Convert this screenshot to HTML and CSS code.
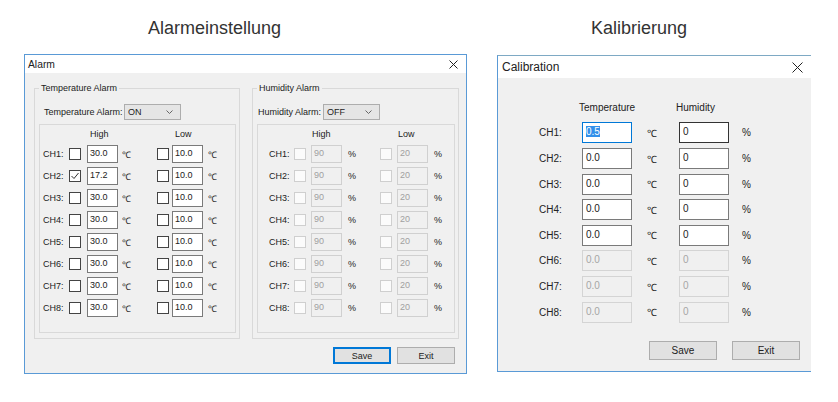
FILE: index.html
```html
<!DOCTYPE html>
<html>

<head>
	<meta charset="utf-8">
	<link rel="stylesheet" href="styles.css">
</head>

<body>
	<div class="page">
		<div class="captions">
			<div class="caption caption-alarm">Alarmeinstellung</div>
			<div class="caption">Kalibrierung</div>
		</div>

		<div class="dialogs">
			<!-- Alarm dialog -->
			<div class="dlg dlg-alarm">
				<div class="titlebar">
					<span>Alarm</span>
					<svg class="close" width="9" height="9" viewBox="0 0 9 9"><path d="M0.5 0.5L8.5 8.5M8.5 0.5L0.5 8.5" /></svg>
				</div>
				<div class="dlg-body">
					<div class="groups">
						<fieldset class="group group-temp">
							<legend>Temperature Alarm</legend>
							<div class="mode">
								<span class="mode-label">Temperature Alarm:</span>
								<div class="combo">ON<svg width="7" height="4" viewBox="0 0 7 4"><path d="M0.5 0.5L3.5 3.5L6.5 0.5" /></svg></div>
							</div>
							<div class="panel">
								<div class="chgrid">
									<span></span><span></span><span class="head">High</span><span></span><span></span><span class="head">Low</span><span></span>
									<span class="ch">CH1:</span><span class="cb"></span><span class="field">30.0</span><span class="unit">℃</span><span class="cb"></span><span class="field">10.0</span><span class="unit">℃</span>
									<span class="ch">CH2:</span><span class="cb"><svg width="10" height="10" viewBox="0 0 10 10"><path d="M1.5 5L4 7.5L8.5 2" /></svg></span><span class="field">17.2</span><span class="unit">℃</span><span class="cb"></span><span class="field">10.0</span><span class="unit">℃</span>
									<span class="ch">CH3:</span><span class="cb"></span><span class="field">30.0</span><span class="unit">℃</span><span class="cb"></span><span class="field">10.0</span><span class="unit">℃</span>
									<span class="ch">CH4:</span><span class="cb"></span><span class="field">30.0</span><span class="unit">℃</span><span class="cb"></span><span class="field">10.0</span><span class="unit">℃</span>
									<span class="ch">CH5:</span><span class="cb"></span><span class="field">30.0</span><span class="unit">℃</span><span class="cb"></span><span class="field">10.0</span><span class="unit">℃</span>
									<span class="ch">CH6:</span><span class="cb"></span><span class="field">30.0</span><span class="unit">℃</span><span class="cb"></span><span class="field">10.0</span><span class="unit">℃</span>
									<span class="ch">CH7:</span><span class="cb"></span><span class="field">30.0</span><span class="unit">℃</span><span class="cb"></span><span class="field">10.0</span><span class="unit">℃</span>
									<span class="ch">CH8:</span><span class="cb"></span><span class="field">30.0</span><span class="unit">℃</span><span class="cb"></span><span class="field">10.0</span><span class="unit">℃</span>
								</div>
							</div>
						</fieldset>

						<fieldset class="group group-hum">
							<legend>Humidity Alarm</legend>
							<div class="mode">
								<span class="mode-label">Humidity Alarm:</span>
								<div class="combo">OFF<svg width="7" height="4" viewBox="0 0 7 4"><path d="M0.5 0.5L3.5 3.5L6.5 0.5" /></svg></div>
							</div>
							<div class="panel">
								<div class="chgrid off">
									<span></span><span></span><span class="head">High</span><span></span><span></span><span class="head">Low</span><span></span>
									<span class="ch">CH1:</span><span class="cb"></span><span class="field">90</span><span class="unit">%</span><span class="cb"></span><span class="field">20</span><span class="unit">%</span>
									<span class="ch">CH2:</span><span class="cb"></span><span class="field">90</span><span class="unit">%</span><span class="cb"></span><span class="field">20</span><span class="unit">%</span>
									<span class="ch">CH3:</span><span class="cb"></span><span class="field">90</span><span class="unit">%</span><span class="cb"></span><span class="field">20</span><span class="unit">%</span>
									<span class="ch">CH4:</span><span class="cb"></span><span class="field">90</span><span class="unit">%</span><span class="cb"></span><span class="field">20</span><span class="unit">%</span>
									<span class="ch">CH5:</span><span class="cb"></span><span class="field">90</span><span class="unit">%</span><span class="cb"></span><span class="field">20</span><span class="unit">%</span>
									<span class="ch">CH6:</span><span class="cb"></span><span class="field">90</span><span class="unit">%</span><span class="cb"></span><span class="field">20</span><span class="unit">%</span>
									<span class="ch">CH7:</span><span class="cb"></span><span class="field">90</span><span class="unit">%</span><span class="cb"></span><span class="field">20</span><span class="unit">%</span>
									<span class="ch">CH8:</span><span class="cb"></span><span class="field">90</span><span class="unit">%</span><span class="cb"></span><span class="field">20</span><span class="unit">%</span>
								</div>
							</div>
						</fieldset>
					</div>
					<div class="buttons">
						<div class="btn default">Save</div>
						<div class="btn">Exit</div>
					</div>
				</div>
			</div>

			<!-- Calibration dialog -->
			<div class="dlg dlg-cal">
				<div class="titlebar">
					<span>Calibration</span>
					<svg class="close" width="11" height="11" viewBox="0 0 11 11"><path d="M0.5 0.5L10.5 10.5M10.5 0.5L0.5 10.5" /></svg>
				</div>
				<div class="dlg-body">
					<div class="calgrid">
						<span></span><span class="head">Temperature</span><span></span><span class="head">Humidity</span><span></span>
						<span class="ch">CH1:</span><span class="field focus"><span class="sel">0.5</span></span><span class="unit">℃</span><span class="field hover">0</span><span class="unit">%</span>
						<span class="ch">CH2:</span><span class="field">0.0</span><span class="unit">℃</span><span class="field">0</span><span class="unit">%</span>
						<span class="ch">CH3:</span><span class="field">0.0</span><span class="unit">℃</span><span class="field">0</span><span class="unit">%</span>
						<span class="ch">CH4:</span><span class="field">0.0</span><span class="unit">℃</span><span class="field">0</span><span class="unit">%</span>
						<span class="ch">CH5:</span><span class="field">0.0</span><span class="unit">℃</span><span class="field">0</span><span class="unit">%</span>
						<span class="ch">CH6:</span><span class="field off">0.0</span><span class="unit">℃</span><span class="field off">0</span><span class="unit">%</span>
						<span class="ch">CH7:</span><span class="field off">0.0</span><span class="unit">℃</span><span class="field off">0</span><span class="unit">%</span>
						<span class="ch">CH8:</span><span class="field off">0.0</span><span class="unit">℃</span><span class="field off">0</span><span class="unit">%</span>
					</div>
					<div class="buttons">
						<div class="btn">Save</div>
						<div class="btn">Exit</div>
					</div>
				</div>
			</div>
		</div>
	</div>
</body>

</html>
```

FILE: styles.css
```css
body {
	margin: 0;
	background-color: #fff;
	font-family: "Liberation Sans", Arial, sans-serif;
	color: #222;
}

.page {
	width: 838px;
	height: 402px;
}

/* headings above the two screenshots */
.captions {
	display: flex;
	align-items: center;
	height: 54px;
	padding-top: 2px;
	box-sizing: border-box;
	padding-left: 148px;
	font-size: 18px;
	color: #333;
}

.caption-alarm {
	width: 443px;
}

.dialogs {
	display: flex;
	align-items: flex-start;
	gap: 30px;
	padding-left: 24px;
}

.dlg {
	border: solid 1px #5a9ad6;
	background-color: #f0f0f0;
	box-sizing: border-box;
}

.titlebar {
	display: flex;
	align-items: center;
	justify-content: space-between;
	background-color: #fff;
}

.close path {
	stroke: #222;
	stroke-width: 1;
	fill: none;
}

/* Alarm dialog */
.dlg-alarm {
	width: 443px;
	height: 320px;
	font-size: 9px;
}

.dlg-alarm .titlebar {
	height: 18px;
	padding: 0 8px 0 3px;
	font-size: 10.3px;
}

.dlg-alarm .dlg-body {
	padding: 9px 7px 9px 9px;
}

.groups {
	display: flex;
	gap: 12px;
}

.group {
	margin: 0;
	min-width: 0;
	width: 206px;
	box-sizing: border-box;
	border: solid 1px #d9d9d9;
	padding: 0 3px 5px 4px;
}

.group-hum {
	width: 207px;
}

.group legend {
	padding: 0 2px;
	line-height: 12px;
}

.mode {
	display: flex;
	align-items: center;
	margin-top: 10px;
	padding-left: 5px;
}

.group-temp .mode-label {
	width: 80px;
}

.group-hum .mode {
	padding-left: 1px;
}

.group-hum .mode-label {
	width: 65px;
}

.combo {
	display: flex;
	align-items: center;
	justify-content: space-between;
	width: 57px;
	height: 16px;
	box-sizing: border-box;
	padding: 0 7px 0 3px;
	background-color: #e5e5e5;
	border: solid 1px #adadad;
}

.combo path {
	stroke: #666;
	fill: none;
}

.panel {
	margin-top: 4px;
	border: solid 1px #d9d9d9;
	padding-bottom: 13px;
}

.chgrid {
	display: grid;
	grid-template-columns: 26px 18px 35px 35px 15px 36px auto;
	grid-template-rows: 18px;
	grid-auto-rows: 22px;
	align-items: center;
	padding-left: 3px;
}

.chgrid.off {
	grid-template-columns: 25px 17px 37px 32px 17px 37px auto;
	padding-left: 11px;
}

.chgrid .head {
	padding-left: 3px;
}

.chgrid.off .head {
	padding-left: 1px;
}

.cb {
	display: flex;
	align-items: center;
	justify-content: center;
	width: 12px;
	height: 12px;
	box-sizing: border-box;
	border: solid 1px #444;
	background-color: #fff;
}

.cb path {
	stroke: #333;
	stroke-width: 1;
	fill: none;
}

.field {
	display: block;
	width: 31px;
	height: 18px;
	box-sizing: border-box;
	border: solid 1px #7a7a7a;
	background-color: #fff;
	padding: 1px 2px 0;
	line-height: 13px;
}

.off .cb {
	border-color: #cfcfcf;
	background-color: #fbfbfb;
}

.off .field {
	border-color: #d0d0d0;
	background-color: #f0f0f0;
	color: #a0a0a0;
}

.buttons {
	display: flex;
	justify-content: flex-end;
}

.btn {
	display: flex;
	align-items: center;
	justify-content: center;
	box-sizing: border-box;
	background-color: #e1e1e1;
	border: solid 1px #adadad;
}

.dlg-alarm .buttons {
	gap: 6px;
	margin-top: 8px;
	padding-right: 4px;
}

.dlg-alarm .btn {
	width: 58px;
	height: 17px;
}

.btn.default {
	border-color: #0078d7;
	box-shadow: inset 0 0 0 1px #0078d7;
}

/* Calibration dialog */
.dlg-cal {
	width: 314px;
	height: 317px;
	margin-top: 1px;
	border-right: none;
	border-top-color: #7ea9c4;
	font-size: 10px;
}

.dlg-cal .titlebar {
	height: 22px;
	padding: 0 8px 0 4px;
	font-size: 12px;
}

.dlg-cal .dlg-body {
	padding: 16.6px 0 0 41px;
}

.calgrid {
	display: grid;
	grid-template-columns: 43px 65px 32px 63px auto;
	grid-auto-rows: 25.6px;
	align-items: center;
}

.calgrid .head {
	margin-left: -3px;
}

.calgrid .field {
	width: 50px;
	height: 21px;
	padding: 2px 3px 0;
	line-height: 14px;
}

.calgrid .field.focus {
	border-color: #0078d7;
}

.calgrid .field.hover {
	border-color: #333;
}

.calgrid .field.off {
	border-color: #d4d4d4;
	background-color: #f0f0f0;
	color: #a6a6a6;
}

.sel {
	background-color: #3390ea;
	color: #fff;
}

.dlg-cal .buttons {
	gap: 15px;
	margin-top: 16px;
	padding-right: 11px;
}

.dlg-cal .btn {
	width: 68px;
	height: 19px;
}
```
